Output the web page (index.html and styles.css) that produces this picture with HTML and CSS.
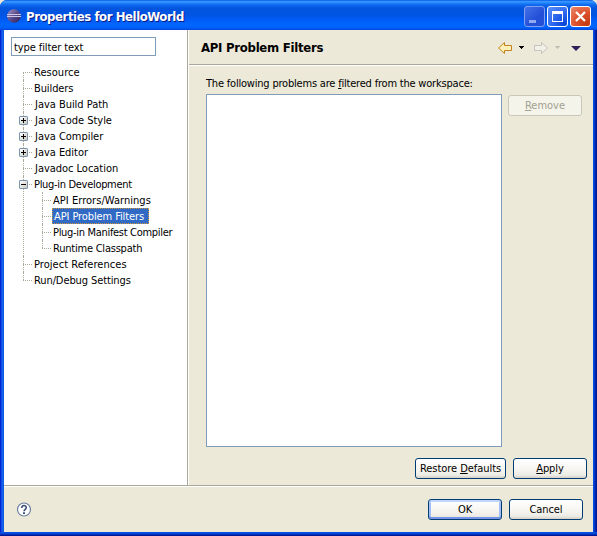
FILE: index.html
```html
<!DOCTYPE html>
<html lang="en">
<head>
<meta charset="utf-8">
<title>Properties for HelloWorld</title>
<link rel="stylesheet" href="styles.css">
</head>
<body>
<div class="window">
  <header class="titlebar">
    <svg class="logo" width="16" height="16" viewBox="0 0 16 16">
      <defs><linearGradient id="orb" x1="0" y1="0" x2="1" y2="1"><stop offset="0" stop-color="#a598c4"/><stop offset=".5" stop-color="#5b4b8c"/><stop offset="1" stop-color="#292053"/></linearGradient></defs>
      <circle cx="8" cy="8" r="6.800" fill="url(#orb)"/>
      <path d="M1 6.500h14M1 8.500h14" stroke="#c9c8ea" stroke-width="1"/>
    </svg>
    <h1 class="title">Properties for HelloWorld</h1>
    <div class="controls">
      <span class="ctl min"><svg width="21" height="21"><path d="M5 14h7v3H5z" fill="#8fa9f2"/></svg></span>
      <span class="ctl max"><svg width="21" height="21"><path d="M5 5h11v11H5zM6 8v7h9V8z" fill="#fff" fill-rule="evenodd"/></svg></span>
      <span class="ctl close"><svg width="21" height="21"><path d="M6 6l9 9M15 6l-9 9" stroke="#fff" stroke-width="2.300"/></svg></span>
    </div>
  </header>
  <main class="content">
    <aside class="side">
      <div class="filter">type filter text</div>
      <ul class="tree">
        <li><span class="label wide">Resource</span></li>
        <li><span class="label normal">Builders</span></li>
        <li><span class="label java">Java Build Path</span></li>
        <li class="plus"><span class="label java">Java Code Style</span></li>
        <li class="plus"><span class="label java">Java Compiler</span></li>
        <li class="plus"><span class="label java">Java Editor</span></li>
        <li><span class="label java">Javadoc Location</span></li>
        <li class="minus"><span class="label tight">Plug-in Development</span>
          <ul class="tree sub">
            <li><span class="label wide">API Errors/Warnings</span></li>
            <li><span class="label selected">API Problem Filters</span></li>
            <li><span class="label tight">Plug-in Manifest Compiler</span></li>
            <li><span class="label snug">Runtime Classpath</span></li>
          </ul>
        </li>
        <li><span class="label wide">Project References</span></li>
        <li><span class="label">Run/Debug Settings</span></li>
      </ul>
    </aside>
    <section class="page">
      <div class="pagehead">
        <h2>API Problem Filters</h2>
        <svg class="nav" width="90" height="16" viewBox="0 0 90 16">
          <path d="M1.500 8 7.500 2.500V5.500H14.500V10.500H7.500V13.500Z" fill="#fff0b8" stroke="#c08520"/>
          <path d="M22 6h5v1h-1v1h-1v1h-1V8h-1V7h-1z" fill="#000"/>
          <path d="M50.500 8 44.500 2.500V5.500H37.500V10.500H44.500V13.500Z" fill="#f1efe6" stroke="#c5c4bd"/>
          <path d="M58 6h5v1h-1v1h-1v1h-1V8h-1V7h-1z" fill="#c2c0b4"/>
          <path d="M74 6h10l-5 5z" fill="#2b2158"/>
        </svg>
      </div>
      <div class="body">
        <p class="caption">The following problems are <u>f</u>iltered from the workspace:</p>
        <div class="row">
          <div class="list"></div>
          <button class="btn remove" disabled><u>R</u>emove</button>
        </div>
        <div class="actions">
          <button class="btn restore">Restore <u>D</u>efaults</button>
          <button class="btn apply"><u>A</u>pply</button>
        </div>
      </div>
    </section>
  </main>
  <footer class="footer">
    <svg class="help" width="16" height="16" viewBox="0 0 16 16"><circle cx="8" cy="7.500" r="6.500" fill="#fff" stroke="#6c7fa0" stroke-width="1.200"/><path d="M5.700 6C5.700 2.800 10.300 2.800 10.300 5.600 10.300 7.300 8 7.300 8 9.200" fill="none" stroke="#3f5379" stroke-width="1.600"/><path d="M7 10.300h2V12H7z" fill="#3f5379"/></svg>
    <div class="dialog">
      <button class="btn default">OK</button>
      <button class="btn">Cancel</button>
    </div>
  </footer>
</div>
</body>
</html>
```
FILE: styles.css
```css
*, *::before, *::after { box-sizing: border-box; }
body { margin: 0; background: #ece9d8; font: 11px/16px "DejaVu Sans Condensed", "DejaVu Sans", sans-serif; font-stretch: condensed; color: #000; letter-spacing: -0.1px; }
h1, h2, p, ul { margin: 0; padding: 0; }
u { text-decoration: underline; text-underline-offset: 1px; text-decoration-thickness: 1px; text-decoration-skip-ink: none; }
.window { width: 597px; height: 536px; display: flex; flex-direction: column; border-radius: 7px 7px 0 0; overflow: hidden; background: linear-gradient(180deg, transparent 532px, #0855dd 532px, #0441d8 534px, #001ea0 535px, #00138c), linear-gradient(90deg, #0019cf, #0831d9 1px, #166aee 2px, #0855dd 4px, #0855dd 593px, #0441d8 594px, #001ea0 596px, #00138c); }
.titlebar { height: 30px; flex: none; display: flex; align-items: center; padding: 2px 6px 0; background: linear-gradient(180deg, #0058e6 0, #3a93ff 5%, #288eff 8%, #0f69ef 16%, #0355dd 27%, #0054e3 50%, #005bf5 66%, #0066ff 82%, #0061fa 93%, #0144d8 100%); }
.logo { flex: none; }
.title { flex: 1; margin-left: 4px; padding-top: 1px; font: bold 13px/18px "DejaVu Sans Condensed", sans-serif; letter-spacing: -0.42px; color: #fff; text-shadow: 1px 1px 0 #0a1883; white-space: nowrap; }
.controls { display: flex; gap: 2px; }
.ctl { width: 21px; height: 21px; border: 1px solid #fff; border-radius: 3px; background: radial-gradient(circle at 85% 90%, #0545d8, #2e68ee 50%, #5e91fa); }
.ctl svg { display: block; margin: -1px; }
.min { border-color: #819fee; background: linear-gradient(135deg, #4471e8, #2450d8 60%); }
.close { background: radial-gradient(circle at 85% 90%, #c23a10, #dd522d 50%, #ec8a6e); }
.content { flex: 1; min-height: 0; display: flex; margin: 0 4px; background: #ece9d8; border-bottom: 1px solid #aca899; }
.side { width: 184px; background: #fff; border-right: 1px solid #aca899; padding: 7px 7px 0; }
.filter { width: 145px; height: 19px; border: 1px solid #7f9db9; padding: 1px 2px 0; line-height: 17px; }
.tree { list-style: none; position: relative; margin-top: 8px; margin-left: 12px; }
.tree li { position: relative; padding-left: 9px; min-height: 16px; white-space: nowrap; }
.tree li::before { content: ""; position: absolute; left: 0; top: 8px; width: 9px; border-top: 1px dotted #aca899; }
.tree li::after { content: ""; position: absolute; left: 0; top: 0; bottom: 0; border-left: 1px dotted #aca899; }
.tree li:first-child::after { top: 8px; }
.tree .sub li:first-child::after { top: 0; }
.tree li:last-child::after { bottom: auto; height: 8px; }
.label { display: inline-block; height: 16px; padding: 1px 2px 0; vertical-align: top; }
.wide { letter-spacing: 0.04px; }
.normal { letter-spacing: -0.1px; }
.java { padding-left: 3px; letter-spacing: -0.03px; }
.tight { letter-spacing: -0.31px; }
.snug { letter-spacing: -0.22px; }
.tree .sub { margin: 0 0 0 10px; }
.selected { width: 97px; margin-left: 1px; padding-left: 2px; background: #316ac5; color: #fff; outline: 1px dotted #ce953a; outline-offset: -1px; }
.plus > .label::before, .minus > .label::before { content: ""; position: absolute; z-index: 1; left: -4px; top: 4px; width: 9px; height: 9px; border: 1px solid #7898b5; border-radius: 1px; background: linear-gradient(#000, #000) 1px 3px / 5px 1px no-repeat, linear-gradient(135deg, #fff, #cdc7ba); }
.plus > .label::before { background: linear-gradient(#000, #000) 1px 3px / 5px 1px no-repeat, linear-gradient(#000, #000) 3px 1px / 1px 5px no-repeat, linear-gradient(135deg, #fff, #cdc7ba); }
.page { flex: 1; border-left: 1px solid #fff; }
.pagehead { height: 36px; padding: 0 6px 0 12px; display: flex; justify-content: space-between; align-items: center; border-bottom: 1px solid #fff; box-shadow: inset 0 -1px #aca899; }
.pagehead h2 { padding-top: 1px; font: bold 13px/18px "DejaVu Sans Condensed", sans-serif; letter-spacing: -0.27px; }
.body { padding: 10px 6px 0 17px; }
.caption { height: 18px; white-space: nowrap; letter-spacing: -0.2px; }
.row { display: flex; gap: 6px; }
.list { width: 296px; height: 353px; background: #fff; border: 1px solid #7f9db9; }
.btn { width: 74px; height: 21px; padding: 1px 0 0; border: 1px solid #003c74; border-radius: 3px; background: linear-gradient(#fff, #f5f4ef 60%, #ecebe5 85%, #d6d0c5); font: inherit; letter-spacing: -0.1px; color: #000; white-space: nowrap; }
.remove { border-color: #c9c7ba; background: #f5f4ea; color: #a1a192; margin-top: 1px; letter-spacing: 0; }
.actions { display: flex; justify-content: flex-end; gap: 7px; padding-top: 11px; }
.restore { width: 91px; letter-spacing: -0.05px; }
.footer { height: 46px; flex: none; margin: 0 4px 4px; padding: 0 10px 0 12px; border-top: 1px solid #fff; background: #ece9d8; display: flex; justify-content: space-between; align-items: center; }
.dialog { display: flex; gap: 7px; padding-bottom: 1px; }
.default { box-shadow: inset 0 2px #c2d6fb, inset 0 -2px #7694e6, inset 2px 0 #a4bff5, inset -2px 0 #a4bff5; }
```
